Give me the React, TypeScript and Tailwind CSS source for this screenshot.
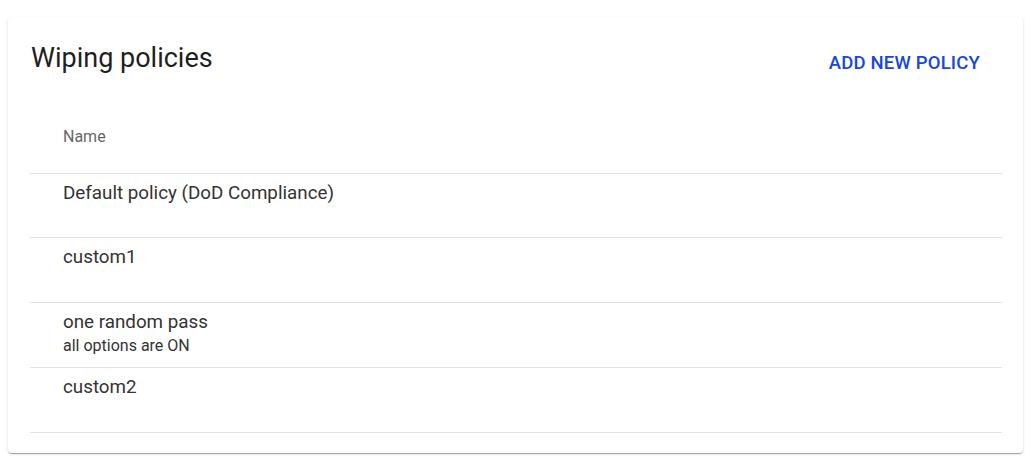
import React from 'react';

type Policy = { name: string; description?: string };

const POLICIES: Policy[] = [
    { name: 'Default policy (DoD Compliance)' },
    { name: 'custom1' },
    { name: 'one random pass', description: 'all options are ON' },
    { name: 'custom2' },
];

const App: React.FC = () => {
    return (
        <div className="min-h-screen bg-white pt-[17px] pl-2 pr-[13px]" style={{ fontFamily: 'Roboto, "Liberation Sans", sans-serif' }}>
            <div className="bg-white rounded-[4px] shadow-[0_2px_1px_-1px_rgba(0,0,0,0.2),0_1px_1px_0_rgba(0,0,0,0.14),0_1px_3px_0_rgba(0,0,0,0.12)] pl-[22px] pr-[21px] pt-[22px] pb-[20px]">
                {/* Header */}
                <div className="flex items-start justify-between">
                    <h2 className="pl-px text-[27px] leading-8 font-normal text-[#1f1f1f] mt-[3px]">Wiping policies</h2>
                    <button className="mt-[8px] mr-[14px] px-2 py-1 text-[18.5px] leading-6 font-medium tracking-[0.01em] uppercase text-[#1747e0] rounded hover:bg-blue-50">
                        Add new policy
                    </button>
                </div>

                {/* Table */}
                <div className="mt-[38px]">
                    <div className="h-[57px] border-b border-[#e0e0e0] pl-[33px] pt-[8px]">
                        <span className="text-[16px] font-normal text-[#666666]">Name</span>
                    </div>
                    {POLICIES.map((p, i) => (
                        <div key={p.name} className={`${i === 0 ? 'h-[64px]' : 'h-[65px]'} border-b border-[#e0e0e0] pl-[33px] pt-[7px]`}>
                            <div className="text-[18.8px] leading-6 text-[#333333]">{p.name}</div>
                            {p.description && (
                                <div className="text-[16px] leading-5 text-[#333333] mt-[2px]">{p.description}</div>
                            )}
                        </div>
                    ))}
                </div>
            </div>
        </div>
    );
};

export default App;
